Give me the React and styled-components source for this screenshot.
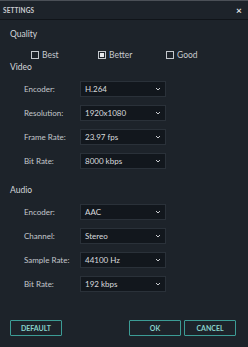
import React from "react";
import styled, { createGlobalStyle } from "styled-components";

const GlobalStyle = createGlobalStyle`
  html, body {
    margin: 0;
    padding: 0;
    background: #1d232a;
  }
  body {
    font-family: Lato, "Open Sans", sans-serif;
  }
`;

const Window = styled.div`
  width: 248px;
  height: 347px;
  background: #1d232a;
  border-top: 1px solid #4b5057;
  box-sizing: border-box;
  display: flex;
  flex-direction: column;
`;

const TitleBar = styled.div`
  height: 18px;
  display: flex;
  align-items: center;
  justify-content: space-between;
  padding: 0 6px 0 3px;
  border-bottom: 1px solid #101419;
  color: #c9ccd0;
  font-size: 6.5px;
  font-weight: 700;
  letter-spacing: 0.1px;
`;

const Close = styled.span`
  font-size: 10px;
  color: #e3e5e8;
  font-weight: 700;
  line-height: 1;
`;

const Heading = styled.div`
  height: 11px;
  line-height: 11px;
  padding-left: 10px;
  margin-top: ${(p) => p.$top}px;
  font-size: 8.5px;
  color: #d3d6da;
`;

const CheckRow = styled.div`
  display: grid;
  grid-template-columns: 67px 68px auto;
  padding-left: 31px;
  margin-top: 9px;
  height: 11px;
  align-items: center;
`;

const CheckItem = styled.label`
  display: flex;
  align-items: center;
  gap: 3px;
  font-size: 8.5px;
  color: #c6cacf;
`;

const Box = styled.span`
  width: 8px;
  height: 8px;
  box-sizing: border-box;
  border: 1px solid #c4c8cd;
  display: flex;
  align-items: center;
  justify-content: center;
  &::after {
    content: "";
    width: 4px;
    height: 4px;
    background: ${(p) => (p.$on ? "#e6e8eb" : "transparent")};
  }
`;

const Rows = styled.div`
  display: flex;
  flex-direction: column;
  gap: 8px;
  margin-top: 8px;
`;

const Row = styled.div`
  display: flex;
  align-items: center;
  height: 16px;
  padding-left: 24px;
`;

const Label = styled.span`
  width: 56px;
  font-size: 8px;
  color: #c3c7cc;
`;

const Select = styled.div`
  width: 86px;
  height: 16px;
  box-sizing: border-box;
  background: #12171d;
  border: 1px solid #2a3139;
  display: flex;
  align-items: center;
  justify-content: space-between;
  padding: 0 4px 0 4px;
  font-size: 8px;
  color: #d8dbde;
`;

const Footer = styled.div`
  display: flex;
  align-items: center;
  padding: 0 12px 0 10px;
  margin-top: 28px;
`;

const Button = styled.div`
  width: 52px;
  height: 16px;
  box-sizing: border-box;
  border: 1.5px solid #3c9c95;
  border-radius: 1px;
  display: flex;
  align-items: center;
  justify-content: center;
  font-size: 7px;
  font-weight: 700;
  color: #88d2cb;
  margin-left: ${(p) => p.$ml || 0}px;
`;

const Chevron = () => (
  <svg width="6" height="4" viewBox="0 0 6 4">
    <path d="M1 1 L3 3 L5 1" stroke="#c9ccd0" strokeWidth="1" fill="none" />
  </svg>
);

const Field = ({ label, value }) => (
  <Row>
    <Label>{label}</Label>
    <Select>
      <span>{value}</span>
      <Chevron />
    </Select>
  </Row>
);

const video = [
  ["Encoder:", "H.264"],
  ["Resolution:", "1920x1080"],
  ["Frame Rate:", "23.97 fps"],
  ["Bit Rate:", "8000 kbps"],
];

const audio = [
  ["Encoder:", "AAC"],
  ["Channel:", "Stereo"],
  ["Sample Rate:", "44100 Hz"],
  ["Bit Rate:", "192 kbps"],
];

export default function App() {
  return (
    <Window>
      <GlobalStyle />
      <TitleBar>
        <span>SETTINGS</span>
        <Close>×</Close>
      </TitleBar>

      <Heading $top={9}>Quality</Heading>
      <CheckRow>
        <CheckItem><Box />Best</CheckItem>
        <CheckItem><Box $on />Better</CheckItem>
        <CheckItem><Box />Good</CheckItem>
      </CheckRow>

      <Heading $top={2}>Video</Heading>
      <Rows>
        {video.map(([l, v]) => <Field key={l} label={l} value={v} />)}
      </Rows>

      <Heading $top={16}>Audio</Heading>
      <Rows>
        {audio.map(([l, v]) => <Field key={l} label={l} value={v} />)}
      </Rows>

      <Footer>
        <Button>DEFAULT</Button>
        <Button $ml={67}>OK</Button>
        <Button $ml={3}>CANCEL</Button>
      </Footer>
    </Window>
  );
}
